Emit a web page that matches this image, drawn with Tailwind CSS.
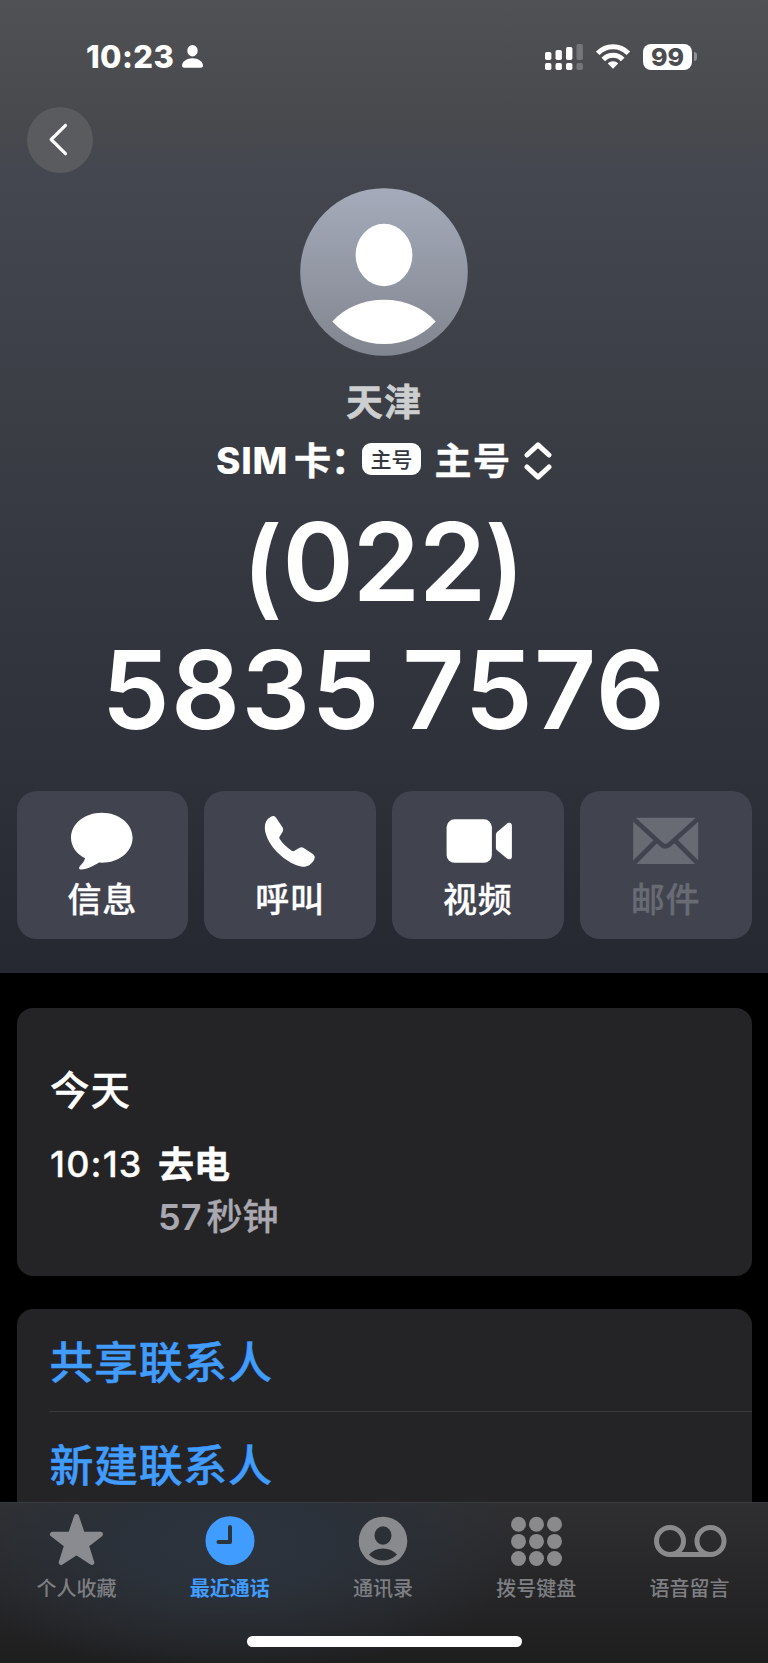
<!DOCTYPE html>
<html lang="zh-CN">
<head>
  <meta charset="UTF-8">
  <meta name="viewport" content="width=device-width, initial-scale=1.0">
  <title>天津 (022) 5835 7576</title>
  <script src="https://cdn.jsdelivr.net/npm/@tailwindcss/browser@4"></script>
</head>
<body class="bg-black">
<div class="w-[768px] h-[1663px] flex flex-col overflow-hidden bg-black text-white font-['Inter','Noto_Sans_CJK_SC',sans-serif]">

  <main class="h-[1502px] shrink-0 overflow-hidden">

    <header class="h-[973px] bg-[linear-gradient(180deg,#505155_0px,#47494d_125px,#44474f_170px,#3a3d44_430px,#2f313b_740px,#252831_973px)]">
      <!-- 状态栏 -->
      <div class="h-[107px] pt-[43px] pl-[86px] pr-[71px] flex items-start justify-between">
        <div class="h-[27px] flex items-center gap-[8px]">
          <span class="text-[31px] leading-[27px] font-extrabold tracking-[0.4px]">10:23</span>
          <svg class="w-[21px] h-[23px]" viewBox="0 0 21 23" fill="currentColor">
            <ellipse cx="10.5" cy="5.8" rx="5.2" ry="5.7"/>
            <path d="M10.5 13.2c5.6 0 10.5 3.600 10.500 7.300 0 1.500-.9 2.200-2.400 2.200H2.400C.9 22.700 0 22 0 20.500c0-3.700 4.900-7.300 10.500-7.300z"/>
          </svg>
        </div>
        <div class="h-[27px] flex items-center">
          <svg class="w-[38px] h-[26px]" viewBox="0 0 38 26" fill="currentColor">
            <rect x="0" y="8" width="6.400" height="8" rx="1.700"/>
            <rect x="10.500" y="6" width="6.400" height="10" rx="1.700"/>
            <rect x="21" y="3" width="6.400" height="13" rx="1.700"/>
            <rect x="31.500" y="0" width="6.400" height="16" rx="1.700" fill="#75767a"/>
            <rect x="0" y="19" width="6.400" height="7" rx="1.700"/>
            <rect x="10.500" y="19" width="6.400" height="7" rx="1.700"/>
            <rect x="21" y="19" width="6.400" height="7" rx="1.700"/>
            <rect x="31.500" y="19" width="6.400" height="7" rx="1.700" fill="#75767a"/>
          </svg>
          <svg class="w-[34px] h-[25px] ml-[13px]" viewBox="0 0 34 25" fill="none" stroke="currentColor" stroke-width="5">
            <path d="M1.700 9.400C10 .6 24 .6 32.300 9.400"/>
            <path d="M7.300 15.400c5.400-5.600 14-5.600 19.400 0"/>
            <path d="M11.800 19.400c2.900-2.900 7.500-2.900 10.400 0L17 24.800z" fill="currentColor" stroke="none"/>
          </svg>
          <div class="ml-[13px] w-[49px] h-[26px] rounded-[8px] bg-white text-[#4b4c50] text-[25px] leading-[26px] font-extrabold text-center">99</div>
          <div class="ml-[2px] w-[3px] h-[9px] rounded-r-full bg-[#8f9093]"></div>
        </div>
      </div>

      <!-- 返回 -->
      <div class="pl-[26.5px]">
        <button class="block w-[66px] h-[66px] rounded-full bg-[#595b5f]">
          <svg class="w-[66px] h-[66px]" viewBox="0 0 66 66" fill="none" stroke="white" stroke-width="3.200" stroke-linecap="round" stroke-linejoin="round">
            <path d="M38.500 18.300 24.200 32.500 38.500 46.700"/>
          </svg>
        </button>
      </div>

      <!-- 头像和号码 -->
      <div class="flex flex-col items-center">
        <svg class="mt-[15px] w-[168px] h-[168px]" viewBox="0 0 168 168">
          <defs>
            <linearGradient id="avatar" x1="0" y1="0" x2="0" y2="1">
              <stop offset="0" stop-color="#a5abba"/>
              <stop offset="1" stop-color="#81858f"/>
            </linearGradient>
          </defs>
          <circle cx="84" cy="84" r="83.800" fill="url(#avatar)"/>
          <ellipse cx="84" cy="67" rx="28.400" ry="31.200" fill="white"/>
          <path d="M32.300 133.400C45 119.500 63 111.700 84 111.700s39 7.800 51.700 21.700C122 148 104.500 156 84 156s-38-8-51.700-22.600z" fill="white"/>
        </svg>
        <div class="mt-[27px] text-[37px] leading-[40px] font-bold tracking-[1px] text-[#cdced0] [-webkit-text-stroke:0.5px]">天津</div>
        <div class="mt-4 h-[44px] w-[336px] flex items-center text-[37px] leading-[44px] font-bold whitespace-nowrap">
          <span class="w-[70px] font-extrabold tracking-[0.8px]">SIM</span>
          <span class="ml-[8px] pt-px [-webkit-text-stroke:0.5px]">卡</span>
          <span class="w-[31px] [-webkit-text-stroke:0.5px]">：</span>
          <span class="w-[59px] h-[32px] rounded-[9px] bg-white text-[#35373e] text-[21px] leading-[33px] font-medium text-center -mt-1">主号</span>
          <span class="ml-[13.5px] pt-px tracking-[1.5px] [-webkit-text-stroke:0.5px]">主号</span>
          <svg class="ml-[12px] w-[28px] h-[38px]" viewBox="0 0 28 38" fill="none" stroke="white" stroke-width="5" stroke-linecap="round" stroke-linejoin="round">
            <path d="M3 13 14 2.800 25 13M3 25l11 10.200L25 25"/>
          </svg>
        </div>
        <h1 class="mt-[15px] text-[108px] leading-[128px] font-[580] text-center whitespace-nowrap">
          <span class="block tracking-[-1px]"><span class="relative top-[4px] -left-px">(</span>022<span class="relative top-[4px] -left-px">)</span></span>
          <span class="block tracking-[1.300px] [word-spacing:-7px]">5835 7576</span>
        </h1>
      </div>

      <!-- 操作按钮 -->
      <div class="mt-[37px] px-[16.5px] grid grid-cols-4 gap-4 text-[34px] leading-[40px] tracking-[1px] font-medium">
        <button class="h-[148px] pt-[17px] rounded-[20px] bg-[#41434f] flex flex-col items-center">
          <svg class="w-[80px] h-[64px]" viewBox="0 0 80 64" fill="white">
            <path d="M39.800 4.700c17.200 0 30.800 11 30.800 25S57 54.700 39.800 54.700c-1 0-1.900 0-2.800-.1-5 3.100-11.200 6.600-17.800 7-2.400.1-2.700-1.800-1.400-3.300 2.500-2.800 4.400-4.800 5.300-8C14.500 45.900 9 38.400 9 29.700c0-14 13.600-25 30.800-25z"/>
          </svg>
          <span class="mt-[8px] [-webkit-text-stroke:0.3px]">信息</span>
        </button>
        <button class="h-[148px] pt-[17px] rounded-[20px] bg-[#41434f] flex flex-col items-center">
          <svg class="w-[80px] h-[64px]" viewBox="0 0 80 64" fill="white">
            <path d="M20.500 8.900c2.400-1.200 4.200-1.100 5.600.9l6.400 9.500c1 1.700.9 3.200-.1 4.900l-2.600 4c-.7 1.100-.6 2 .1 3.100 2.900 4.300 6.900 8.100 11.500 11.200 1.300.8 2.200.9 3.500.1l4.300-2.700c1.500-.9 3-.9 4.500 0l9.200 6.200c2 1.400 2.400 3.300 1.300 5.400-2.300 4.800-6.600 7.500-11.700 7.300-6-.3-16.300-5.500-25.500-14.700C18.400 35.200 14.800 25.600 14.800 19.500c0-4.900 1.900-8.700 5.700-10.600z"/>
          </svg>
          <span class="mt-[8px] [-webkit-text-stroke:0.3px]">呼叫</span>
        </button>
        <button class="h-[148px] pt-[17px] rounded-[20px] bg-[#41434f] flex flex-col items-center">
          <svg class="w-[80px] h-[64px]" viewBox="0 0 80 64" fill="white">
            <rect x="8.600" y="11.300" width="45.300" height="43.500" rx="8"/>
            <path d="M57.900 26.800c0-1.300.5-2.200 1.500-3.100l8.900-7.500c3-2.500 5.600-1.300 5.600 1.600v30.600c0 2.900-2.600 4.100-5.600 1.600l-8.900-7.500c-1-.9-1.500-1.800-1.500-3.100z"/>
          </svg>
          <span class="mt-[8px] [-webkit-text-stroke:0.3px]">视频</span>
        </button>
        <button class="h-[148px] pt-[17px] rounded-[20px] bg-[#41434f] text-[#696b74] flex flex-col items-center">
          <svg class="w-[80px] h-[64px]" viewBox="0 0 80 64">
            <rect x="7.200" y="9.700" width="65" height="46.400" rx="4" fill="currentColor"/>
            <path d="M6 9.500 35.500 36.500q4 3.600 8 0L73.500 9.500M6 57 30.500 32.500M73.500 57 49 32.500" fill="none" stroke="#41434f" stroke-width="4.600"/>
          </svg>
          <span class="mt-[8px] [-webkit-text-stroke:0.3px]">邮件</span>
        </button>
      </div>
    </header>

    <!-- 通话记录 -->
    <section class="mt-[35px] mx-[16.5px] h-[268px] rounded-[16px] bg-[#242426] pt-[63px] pl-[33.5px]">
      <div class="text-[39.500px] leading-[40px] font-medium tracking-[1px] [-webkit-text-stroke:0.3px]">今天</div>
      <div class="mt-[27px] flex text-[36px] leading-[52px]">
        <div class="w-[108px] font-medium tracking-[1.200px] [-webkit-text-stroke:0.3px]">10:13</div>
        <div class="pt-px">
          <div class="font-bold [-webkit-text-stroke:0.5px]">去电</div>
          <div class="font-medium text-[#a9a8b1]"><span class="font-semibold">57</span><span class="ml-[5px] [-webkit-text-stroke:0.3px]">秒钟</span></div>
        </div>
      </div>
    </section>

    <section class="mt-[33px] mx-[16.5px] rounded-t-[16px] bg-[#242426] pl-[32px] text-[44px] font-medium text-[#409cff] [-webkit-text-stroke:0.4px]">
      <div class="h-[103px] pl-px leading-[109px] border-b border-[#3b3b3d] tracking-[0.6px]">共享联系人</div>
      <div class="h-[103px] pl-px leading-[108px] tracking-[0.6px]">新建联系人</div>
    </section>
  </main>

  <!-- 底部标签栏 -->
  <nav class="h-[161px] shrink-0 border-t border-[#3a3b3d] bg-[radial-gradient(ellipse_300px_130px_at_230px_40px,#2c343f_0%,#2b3139_40%,transparent_100%),linear-gradient(180deg,#2f2f31_0%,#1e1e1f_100%)]">
    <div class="h-[133px] mr-[2px] grid grid-cols-5 text-[20px] leading-[24px] font-medium text-[#7e7f83] text-center">
      <div class="pt-[7px] flex flex-col items-center">
        <svg class="w-[80px] h-[62px]" viewBox="0 0 80 62" fill="#898b90" stroke="#898b90" stroke-width="5" stroke-linejoin="round">
          <path d="m39.500 6.500 6 17.800h18L49.300 35.300 54.800 52.500 39.500 42.500 24.200 52.500 29.700 35.300 15.500 24.300h18z"/>
        </svg>
        <span class="mt-[5px]">个人收藏</span>
      </div>
      <div class="pt-[7px] flex flex-col items-center text-[#409cff]">
        <svg class="w-[80px] h-[62px]" viewBox="0 0 80 62">
          <circle cx="40" cy="30.700" r="24.500" fill="currentColor"/>
          <path d="M40 17v15H28.500" fill="none" stroke="#2b333d" stroke-width="4" stroke-linecap="round" stroke-linejoin="round"/>
        </svg>
        <span class="mt-[5px] font-bold">最近通话</span>
      </div>
      <div class="pt-[7px] flex flex-col items-center">
        <svg class="w-[80px] h-[62px]" viewBox="0 0 80 62">
          <circle cx="40" cy="31" r="24.300" fill="#898a8e"/>
          <ellipse cx="40" cy="25.500" rx="8.500" ry="9.300" fill="#2c3035"/>
          <path d="M26 44.500c3.500-3.900 8.400-6 14-6s10.500 2.100 14 6c-4 4-8.600 6-14 6s-10-2-14-6z" fill="#2c3035"/>
        </svg>
        <span class="mt-[5px]">通讯录</span>
      </div>
      <div class="pt-[7px] flex flex-col items-center">
        <svg class="w-[80px] h-[62px]" viewBox="0 0 80 62" fill="#8a8a8c">
          <circle cx="22.500" cy="14.200" r="7.500"/><circle cx="40.500" cy="14.200" r="7.500"/><circle cx="58.500" cy="14.200" r="7.500"/>
          <circle cx="22.500" cy="31.400" r="7.500"/><circle cx="40.500" cy="31.400" r="7.500"/><circle cx="58.500" cy="31.400" r="7.500"/>
          <circle cx="22.500" cy="48.500" r="7.500"/><circle cx="40.500" cy="48.500" r="7.500"/><circle cx="58.500" cy="48.500" r="7.500"/>
        </svg>
        <span class="mt-[5px]">拨号键盘</span>
      </div>
      <div class="pt-[7px] flex flex-col items-center">
        <svg class="w-[80px] h-[62px]" viewBox="0 0 80 62" fill="none" stroke="#8a8a8c" stroke-width="5">
          <circle cx="21" cy="31" r="13.500"/>
          <circle cx="61.500" cy="31" r="13.500"/>
          <path d="M21 44.500h40.500"/>
        </svg>
        <span class="mt-[5px]">语音留言</span>
      </div>
    </div>
    <div class="mx-auto w-[275px] h-[11px] rounded-full bg-white"></div>
  </nav>
</div>
</body>
</html>
